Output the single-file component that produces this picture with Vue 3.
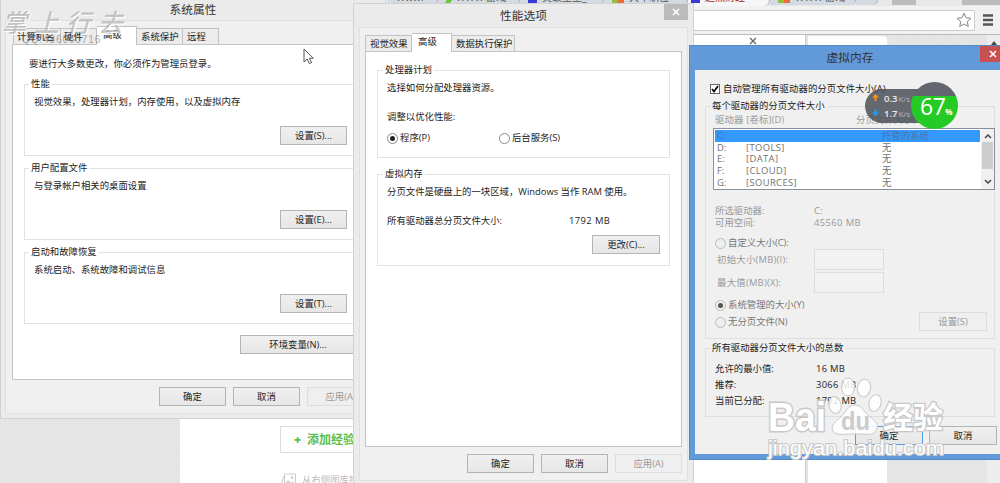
<template>
    <div class="desktop">
        <!-- browser behind the dialogs -->
        <div class="browser">
            <div class="tab-strip">
                <div v-for="(tab, i) in browserTabs" :key="i" class="browser-tab" :class="tab.kind" :style="{ width: tab.width + 'px' }">
                    <i v-if="tab.icon" class="favicon" :class="tab.icon"></i>
                    <span>{{ tab.text }}</span>
                </div>
            </div>
            <div class="address-bar">
                <div class="omnibox">
                    <svg width="16" height="16" viewBox="0 0 16 16"><path d="M8 1.2l2 4.600 5 .500-3.800 3.300 1.100 4.900L8 12l-4.300 2.500 1.100-4.900L1 6.300l5-.500z" fill="#fff" stroke="#888" stroke-width="1" /></svg>
                </div>
                <svg class="menu-icon" width="10" height="12" viewBox="0 0 10 12"><path d="M0 1.500h10M0 6h10M0 10.500h10" stroke="#555" stroke-width="2.400" /></svg>
            </div>
            <div class="page">
                <div class="texture page-left"></div>
                <div class="page-main">
                    <div class="add-button"><b>+</b><span>添加经验</span></div>
                    <div class="hint">
                        <svg width="17" height="14" viewBox="0 0 17 14"><path d="M4.500 1h11v12h-11zM4 3L1 12l3 1" fill="none" stroke="#ccc" /><path d="M5 11l3-4 3 3 2-2 2 4z" fill="#ccc" /><circle cx="12" cy="4.500" r="1.300" fill="#ccc" /></svg>
                        <span>从右侧图库拖拽</span>
                    </div>
                </div>
                <div class="page-side">
                    <svg width="8" height="8" viewBox="0 0 8 8"><path d="M1 1l6 6M7 1L1 7" stroke="#666" stroke-width="1.300" /></svg>
                </div>
                <div class="page-card"></div>
                <div class="texture page-right"></div>
                <div class="page-scroll">
                    <svg width="6" height="4" viewBox="0 0 6 4"><path d="M0 4l3-4 3 4z" fill="#444" /></svg>
                </div>
            </div>
        </div>

        <!-- system properties -->
        <div class="window system">
            <div class="title">系统属性</div>
            <div class="client">
                <div class="tabs">
                    <span v-for="tab in systemTabs" :key="tab.name" class="tab" :class="{ active: tab.name === '高级' }" :style="{ width: tab.width + 'px' }">{{ tab.name }}</span>
                </div>
                <div class="sheet">
                    <p class="intro">要进行大多数更改，你必须作为管理员登录。</p>
                    <div v-for="g in systemGroups" :key="g.title" class="group">
                        <div class="legend">{{ g.title }}</div>
                        <p>{{ g.text }}</p>
                        <button>设置({{ g.key }})...</button>
                    </div>
                    <button class="env">环境变量(N)...</button>
                </div>
                <div class="footer">
                    <button>确定</button>
                    <button>取消</button>
                    <button disabled>应用(A)</button>
                </div>
            </div>
        </div>

        <!-- performance options -->
        <div class="window performance">
            <div class="title">性能选项</div>
            <div class="close">
                <svg width="8" height="8" viewBox="0 0 8 8"><path d="M1 1l6 6M7 1L1 7" stroke="#fff" stroke-width="1.500" /></svg>
            </div>
            <div class="client">
                <div class="tabs">
                    <span v-for="tab in performanceTabs" :key="tab.name" class="tab" :class="{ active: tab.name === '高级' }" :style="{ width: tab.width + 'px' }">{{ tab.name }}</span>
                </div>
                <div class="sheet">
                    <div class="group cpu">
                        <div class="legend">处理器计划</div>
                        <p>选择如何分配处理器资源。</p>
                        <p class="adjust">调整以优化性能:</p>
                        <div class="radios">
                            <label><i class="radio on"></i>程序(P)</label>
                            <label><i class="radio"></i>后台服务(S)</label>
                        </div>
                    </div>
                    <div class="group memory">
                        <div class="legend">虚拟内存</div>
                        <p>分页文件是硬盘上的一块区域，Windows 当作 RAM 使用。</p>
                        <div class="total"><span>所有驱动器总分页文件大小:</span><span class="num">1792 MB</span></div>
                        <button>更改(C)...</button>
                    </div>
                </div>
                <div class="footer">
                    <button>确定</button>
                    <button>取消</button>
                    <button disabled>应用(A)</button>
                </div>
            </div>
        </div>

        <!-- virtual memory -->
        <div class="window virtual">
            <div class="title">虚拟内存</div>
            <div class="close">
                <svg width="8" height="8" viewBox="0 0 8 8"><path d="M1 1l6 6M7 1L1 7" stroke="#fff" stroke-width="1.500" /></svg>
            </div>
            <div class="client">
                <label class="auto">
                    <i class="check"><svg width="8" height="8" viewBox="0 0 8 8"><path d="M1 4l2 2.500L7 1" fill="none" stroke="#111" stroke-width="1.800" /></svg></i>
                    自动管理所有驱动器的分页文件大小(A)
                </label>
                <div class="group drives">
                    <div class="legend">每个驱动器的分页文件大小</div>
                    <div class="list-head"><span>驱动器 [卷标](D)</span><span>分页文件大小(MB)</span></div>
                    <div class="list">
                        <div class="rows">
                            <div v-for="d in drives" :key="d.letter" class="row" :class="{ selected: d.letter === 'C:' }">
                                <span>{{ d.letter }}</span><span class="num">{{ d.label }}</span><span>{{ d.size }}</span>
                            </div>
                        </div>
                        <div class="scrollbar">
                            <svg width="8" height="6" viewBox="0 0 8 6"><path d="M1 5l3-3 3 3" fill="none" stroke="#444" stroke-width="1.500" /></svg>
                            <i></i>
                            <svg width="8" height="6" viewBox="0 0 8 6"><path d="M1 1l3 3 3-3" fill="none" stroke="#444" stroke-width="1.500" /></svg>
                        </div>
                    </div>
                    <div class="info drive"><span>所选驱动器:</span><span>C:</span></div>
                    <div class="info"><span>可用空间:</span><span class="num">45560 MB</span></div>
                    <label class="custom"><i class="radio"></i>自定义大小(C):</label>
                    <div class="field"><span>初始大小(MB)(I):</span><i></i></div>
                    <div class="field"><span>最大值(MB)(X):</span><i></i></div>
                    <div class="choice">
                        <div>
                            <label><i class="radio on"></i>系统管理的大小(Y)</label>
                            <label><i class="radio"></i>无分页文件(N)</label>
                        </div>
                        <button disabled>设置(S)</button>
                    </div>
                </div>
                <div class="group totals">
                    <div class="legend">所有驱动器分页文件大小的总数</div>
                    <div v-for="t in totals" :key="t.name" class="info"><span>{{ t.name }}</span><span class="num">{{ t.value }}</span></div>
                </div>
                <div class="footer">
                    <button class="primary">确定</button>
                    <button>取消</button>
                </div>
            </div>
        </div>

        <!-- network speed badge -->
        <div class="speed">
            <div class="rates">
                <div><svg width="7" height="8" viewBox="0 0 7 8"><path d="M3.500 0L7 3.500H4.500V7h-2V3.500H0z" fill="#ff9212" /></svg><b>0.3</b>K/s</div>
                <div><svg width="7" height="8" viewBox="0 0 7 8"><path d="M3.500 7L7 3.500H4.500V0h-2v3.500H0z" fill="#1d9bf5" /></svg><b>1.7</b>K/s</div>
            </div>
            <div class="ball">67<small>%</small></div>
        </div>

        <div class="stamp">掌上行去</div>
        <div class="stamp-id">QQ:486060716</div>

        <svg class="cursor" width="12" height="18" viewBox="0 0 12 18"><path d="M1 1v13l3.200-3 2.200 4.600 2.200-1-2.200-4.400h3.900z" fill="#fff" stroke="#555" /></svg>

        <svg class="watermark" width="190" height="90" viewBox="0 0 190 90">
            <g fill="#fff" fill-opacity=".85" stroke="#c8c8c8">
                <text class="brand" x="4" y="56" textLength="58" lengthAdjust="spacingAndGlyphs">Bai</text>
                <ellipse cx="71" cy="30" rx="6" ry="8.500" transform="rotate(-12 71 30)" />
                <ellipse cx="84" cy="12" rx="6.500" ry="9" />
                <ellipse cx="100" cy="13" rx="6.500" ry="9" transform="rotate(10 100 13)" />
                <ellipse cx="111" cy="28" rx="6" ry="8.500" transform="rotate(15 111 28)" />
                <path d="M91 30c-7 0-9 7-14 12-6 5-11 8-8 14 3 5 10 3 22 3s18 2 21-3c4-7-1-10-7-15s-7-11-14-11z" />
                <text class="experience" x="119" y="53" textLength="60" lengthAdjust="spacingAndGlyphs">经验</text>
            </g>
            <text class="site" x="4" y="80" textLength="176" lengthAdjust="spacingAndGlyphs">jingyan.baidu.com</text>
            <text class="du" x="77" y="55" textLength="29" lengthAdjust="spacingAndGlyphs">du</text>
        </svg>
    </div>
</template>

<script setup>
const browserTabs = [
    { width: 24, kind: 'dark' },
    { width: 6, kind: 'gap' },
    { width: 50, text: 'Www.' },
    { width: 82, text: 'WWW 游戏', icon: 'green' },
    { width: 84, text: '突破壁垒_', icon: 'blue' },
    { width: 84, text: '大军职位', icon: 'orange' },
    { width: 82, text: '起点财经', icon: 'blue', kind: 'current' },
    { width: 86, text: 'WWW 游戏', icon: 'orange' },
    { width: 22 },
    { width: 14, kind: 'gap' },
    { width: 24, kind: 'dark' },
    { width: 46, kind: 'gap' },
    { width: 38, kind: 'dark' },
];

const systemTabs = [
    { name: '计算机名', width: 48 },
    { name: '硬件', width: 36 },
    { name: '高级', width: 40 },
    { name: '系统保护', width: 46 },
    { name: '远程', width: 36 },
];

const performanceTabs = [
    { name: '视觉效果', width: 47 },
    { name: '高级', width: 40 },
    { name: '数据执行保护', width: 63 },
];

const systemGroups = [
    { title: '性能', text: '视觉效果，处理器计划，内存使用，以及虚拟内存', key: 'S' },
    { title: '用户配置文件', text: '与登录帐户相关的桌面设置', key: 'E' },
    { title: '启动和故障恢复', text: '系统启动、系统故障和调试信息', key: 'T' },
];

const drives = [
    { letter: 'C:', label: '', size: '托管的系统' },
    { letter: 'D:', label: '[TOOLS]', size: '无' },
    { letter: 'E:', label: '[DATA]', size: '无' },
    { letter: 'F:', label: '[CLOUD]', size: '无' },
    { letter: 'G:', label: '[SOURCES]', size: '无' },
];

const totals = [
    { name: '允许的最小值:', value: '16 MB' },
    { name: '推荐:', value: '3066 MB' },
    { name: '当前已分配:', value: '1792 MB' },
];
</script>

<style>
body {
    margin: 0;
    overflow: hidden;
}
</style>

<style scoped>
.desktop {
    position: relative;
    width: 1000px;
    height: 483px;
    overflow: hidden;
    background: #fff;
    color: #222;
    font: 9.4px/12px "Open Sans", "Noto Sans CJK SC", sans-serif;
    white-space: nowrap;
}

.desktop * {
    box-sizing: border-box;
}

p {
    margin: 0;
}

/* browser */
.browser {
    display: flex;
    flex-direction: column;
    height: 483px;
}

.tab-strip {
    display: flex;
    height: 6px;
    padding-left: 356px;
    overflow: hidden;
    background: #e9e9e9;
    flex: none;
}

.browser-tab {
    display: flex;
    flex: none;
    gap: 5px;
    height: 5px;
    padding-left: 8px;
    background: #d3dae1;
    border-right: 1px solid #a9b0b6;
    border-radius: 0 0 6px 0;
    font-size: 10px;
    line-height: 6px;
    overflow: hidden;
    color: #555;
}

.browser-tab span {
    margin-top: -6px;
}

.browser-tab.gap {
    background: none;
    border: 0;
}

.browser-tab.dark {
    background: #bbb;
    border: 0;
    border-radius: 0;
}

.browser-tab.current {
    height: 6px;
    padding-left: 3px;
    background: #f6f6f6;
    color: #a22;
}

.favicon {
    width: 9px;
    height: 3px;
}

.favicon.green {
    background: #6bc72c;
    transform: skewX(-30deg);
    width: 5px;
}

.favicon.blue {
    background: #3a38d8;
}

.favicon.orange {
    background: linear-gradient(90deg, #8fbf3c 50%, #ee6c35 50%);
    width: 12px;
}

.address-bar {
    display: flex;
    align-items: center;
    height: 29px;
    padding-left: 680px;
    background: #f1f1f1;
    border-bottom: 1px solid #bbb;
    flex: none;
}

.omnibox {
    display: flex;
    align-items: center;
    justify-content: flex-end;
    width: 295px;
    height: 21px;
    padding-right: 2px;
    background: #fff;
    border: 1px solid #ccc;
    border-radius: 2px;
}

.menu-icon {
    margin-left: 8px;
}

.page {
    display: flex;
    flex: 1;
    background: #e4e4e4;
}

.texture {
    background: repeating-linear-gradient(45deg, #e7e7e7 0 1px, #e4e4e4 1px 3px);
}

.page-left {
    width: 180px;
}

.page-main {
    width: 514px;
    padding: 391px 0 0 100px;
    background: #fff;
}

.add-button {
    display: flex;
    align-items: center;
    gap: 6px;
    width: 120px;
    height: 27px;
    padding-left: 13px;
    border: 1px solid #ddd;
    color: #5bbd4c;
    font-size: 12px;
    font-weight: bold;
}

.hint {
    display: flex;
    align-items: center;
    gap: 5px;
    height: 16px;
    margin-top: 19px;
    color: #bbb;
}

.page-side {
    width: 112px;
    padding: 0 0 0 55px;
    background: #fff;
    border-right: 1px solid #ccc;
}

.page-side svg {
    display: block;
    margin-top: 2px;
}

.page-card {
    width: 79px;
    margin: 1px 0 0 2px;
    background: #fff;
    border-radius: 0 4px 0 0;
}

.page-right {
    width: 100px;
}

.page-scroll {
    display: flex;
    flex: 1;
    justify-content: center;
    padding-top: 6px;
    background: #ededed;
}

/* windows */
.window {
    position: absolute;
    background: #ebebeb;
    border: 1px solid #d2d2d2;
    overflow: hidden;
}

.title {
    text-align: center;
    font-size: 11.7px;
    line-height: 16px;
    color: #333;
}

.client {
    display: flex;
    flex-direction: column;
    background: #f0f0f0;
    border: 1px solid #e0e0e0;
}

.close {
    position: absolute;
    display: flex;
    align-items: center;
    justify-content: center;
    width: 24px;
    height: 16px;
    background: #bbb;
}

.tabs {
    display: flex;
    align-items: flex-end;
    height: 18px;
    flex: none;
}

.tab {
    height: 16px;
    padding-left: 4px;
    background: #ececec;
    border: 1px solid #c2c2c2;
    border-left-width: 0;
    border-bottom: 0;
    line-height: 15px;
    flex: none;
}

.tab:first-child {
    border-left-width: 1px;
}

.tab.active {
    height: 19px;
    margin-bottom: -1px;
    padding-left: 6px;
    background: #fff;
    line-height: 16px;
    position: relative;
}

.sheet {
    display: flex;
    flex-direction: column;
    flex: none;
    background: #fff;
    border: 1px solid #c4c4c4;
}

.group {
    display: flex;
    flex-direction: column;
    flex: none;
    border: 1px solid #e2e2e2;
}

.legend {
    align-self: flex-start;
    margin: -7px 0 0 4px;
    padding: 0 2px;
    background: #fff;
    height: 12px;
}

button {
    flex: none;
    width: 67px;
    height: 19px;
    padding: 0;
    background: linear-gradient(#f0f0f0, #e6e6e6);
    border: 1px solid #b4b4b4;
    border-radius: 0;
    color: #222;
    font: inherit;
}

button:disabled {
    background: #efefef;
    border-color: #ddd;
    color: #999;
}

.footer {
    display: flex;
    gap: 7px;
}

.num {
    letter-spacing: 0.4px;
}

label {
    display: flex;
    align-items: center;
}

.radio {
    display: flex;
    align-items: center;
    justify-content: center;
    flex: none;
    width: 11px;
    height: 11px;
    margin-right: 2px;
    background: #fff;
    border: 1px solid #888;
    border-radius: 50%;
}

.radio.on::after {
    content: "";
    width: 5px;
    height: 5px;
    background: #222;
    border-radius: 50%;
}

.system {
    left: 0;
    top: -1px;
    width: 386px;
    height: 420px;
}

.system .title {
    height: 20px;
    line-height: 19px;
}

.system .client {
    height: 394px;
    margin: 0 4px;
    padding: 5px 0 0 6px;
}

.system .tabs {
    padding-left: 1px;
}

.system .tab:first-child {
    padding-left: 3px;
}

.system .tab:nth-child(2) {
    padding-left: 3px;
}

.system .sheet {
    width: 362px;
    height: 336px;
    padding: 13px 0 0 11px;
}

.intro {
    padding-left: 5px;
}

.system .group {
    width: 336px;
    height: 72px;
    margin-top: 12px;
}

.system .intro + .group {
    margin-top: 14px;
}

.system .group p {
    margin: 6px 0 0 9px;
}

.system .group button {
    margin: 18px 0 0 255px;
}

.system .env {
    width: 116px;
    margin: 11px 0 0 216px;
}

.system .footer {
    padding: 7px 0 0 147px;
}

.performance {
    left: 353px;
    top: 3px;
    width: 341px;
    height: 482px;
}

.performance .title {
    height: 23px;
    line-height: 22px;
}

.performance .close {
    top: 0;
    right: 5px;
}

.performance .client {
    height: 454px;
    margin: 0 5px 0 5px;
    padding: 5px 0 0 5px;
}

.performance .sheet {
    width: 317px;
    height: 396px;
    padding: 18px 0 0 11px;
}

.performance .group {
    width: 293px;
    height: 88px;
}

.performance .legend {
    margin-left: 5px;
}

.performance .group p {
    margin: 6px 0 0 9px;
}

.performance .group .adjust {
    margin-top: 17px;
}

.radios {
    display: flex;
    gap: 69px;
    margin: 9px 0 0 9px;
}

.performance .memory {
    height: 92px;
    margin-top: 16px;
}

.total {
    display: flex;
    margin: 17px 0 0 9px;
}

.total span:first-child {
    width: 182px;
}

.memory button {
    width: 68px;
    margin: 8px 0 0 214px;
}

.performance .footer {
    padding: 7px 0 0 102px;
}

.virtual {
    left: 689px;
    top: 45px;
    width: 322px;
    height: 415px;
    background: #6299d9;
    border-color: #5289c9;
}

.virtual .title {
    height: 24px;
    line-height: 22px;
}

.virtual .close {
    top: 0;
    left: 290px;
    width: 25px;
    background: #c95050;
}

.virtual .client {
    height: 384px;
    margin: 0 5px;
    padding: 12px 0 0 10px;
    border: 0;
}

.auto {
    height: 13px;
    padding-left: 5px;
    letter-spacing: 0.06px;
}

.check {
    display: flex;
    align-items: center;
    justify-content: center;
    width: 10px;
    height: 10px;
    margin-right: 3px;
    background: #fff;
    border: 1px solid #666;
}

.virtual .group {
    width: 290px;
    border-color: #dfdfdf;
}

.virtual .legend {
    background: #f0f0f0;
}

.virtual .drives {
    height: 233px;
    margin-top: 11px;
    color: #999;
}

.drives .legend {
    color: #222;
}

.list-head {
    display: flex;
    margin: 2px 0 0 9px;
}

.list-head span:first-child {
    width: 141px;
    letter-spacing: 0.15px;
}

.list {
    display: flex;
    width: 282px;
    height: 62px;
    margin: 2px 0 0 7px;
    background: #fff;
    border: 1px solid #8a9099;
    color: #707070;
    flex: none;
}

.rows {
    width: 267px;
    padding: 1px;
}

.row {
    display: grid;
    grid-template-columns: 29px 136px 1fr;
    height: 11.7px;
    padding-left: 2px;
    line-height: 11.7px;
}

.row.selected {
    background: #3399ff;
    color: #4775a4;
}

.scrollbar {
    display: flex;
    flex-direction: column;
    align-items: center;
    width: 13px;
    padding: 4px 0;
    background: #f0f0f0;
}

.scrollbar i {
    width: 11px;
    height: 27px;
    margin: 3px 0 auto;
    background: #cdcdcd;
}

.info {
    display: flex;
    height: 12px;
    margin-left: 9px;
}

.info span:first-child {
    width: 99px;
}

.info.drive {
    margin-top: 15px;
}

.virtual .radio {
    background: #eee;
    border-color: #bbb;
}

.virtual .radio.on::after {
    background: #555;
}

.virtual .drives label {
    color: #777;
    height: 12px;
}

.drives .custom {
    margin: 8px 0 0 9px;
}

.field {
    display: flex;
    align-items: center;
    height: 21px;
    margin-left: 11px;
    flex: none;
}

.field + .field {
    margin-top: 2px;
}

.field span {
    width: 97px;
    letter-spacing: 0.25px;
}

.field i {
    width: 70px;
    height: 21px;
    border: 1px solid #ddd;
    background: #f2f2f2;
}

.choice {
    display: flex;
    margin: 6px 0 0 9px;
}

.choice > div {
    width: 204px;
}

.choice label + label {
    margin-top: 5px;
}

.choice button {
    width: 68px;
    margin-top: 13px;
}

.virtual .totals {
    height: 69px;
    margin-top: 9px;
}

.totals .info {
    margin-top: 4px;
}

.totals .legend + .info {
    margin-top: 9px;
}

.totals .info span:first-child {
    width: 101px;
}

.totals .num {
    letter-spacing: 0.3px;
}

.virtual .footer {
    gap: 6px;
    padding: 9px 0 0 150px;
}

.virtual .footer button {
    width: 68px;
}

button.primary {
    border-color: #4f9fe8;
}

/* overlays */
.speed {
    position: absolute;
    left: 865px;
    top: 82px;
    display: flex;
    align-items: center;
}

.rates {
    width: 64px;
    height: 34px;
    padding: 2px 0 0 7px;
    background: rgba(78, 81, 90, 0.86);
    border-radius: 17px 0 0 17px;
    color: #b5b5b8;
    font-size: 8px;
    line-height: 15px;
}

.rates b {
    margin: 0 1px 0 5px;
    color: #eee;
    font-size: 9.5px;
    font-weight: 600;
}

.ball {
    width: 47px;
    height: 47px;
    margin-left: -18px;
    padding-left: 9px;
    border-radius: 50%;
    background: linear-gradient(#63666e 14px, #25cb25 14px);
    color: #fff;
    font: 23px/48px "Open Sans", sans-serif;
    letter-spacing: -0.5px;
}

.ball small {
    font-size: 8px;
    font-weight: bold;
}

.stamp {
    position: absolute;
    left: 2px;
    top: 5px;
    color: rgba(130, 130, 130, 0.45);
    font: italic 500 25px/32px "Noto Sans CJK SC", sans-serif;
    letter-spacing: 7px;
    text-shadow: 1px 1px 0 #fff;
}

.stamp-id {
    position: absolute;
    left: 22px;
    top: 34px;
    color: rgba(110, 110, 110, 0.6);
    font: 10px/12px "Liberation Sans", sans-serif;
    letter-spacing: 0.9px;
}

.cursor {
    position: absolute;
    left: 303px;
    top: 48px;
}

.watermark {
    position: absolute;
    left: 764px;
    top: 375px;
}

.brand {
    font: bold 40px "Liberation Sans", sans-serif;
    stroke-width: 3px;
    paint-order: stroke;
    fill-opacity: 1;
}

.experience {
    font: bold 30px "Noto Sans CJK SC", sans-serif;
    stroke-width: 2.5px;
    paint-order: stroke;
    fill-opacity: 1;
}

.site {
    font: 20px "Liberation Sans", sans-serif;
    fill: #fff;
    stroke: #c8c8c8;
    stroke-width: 2px;
    paint-order: stroke;
}

.du {
    font: bold 25px "Liberation Sans", sans-serif;
    fill: #ccc;
}
</style>
